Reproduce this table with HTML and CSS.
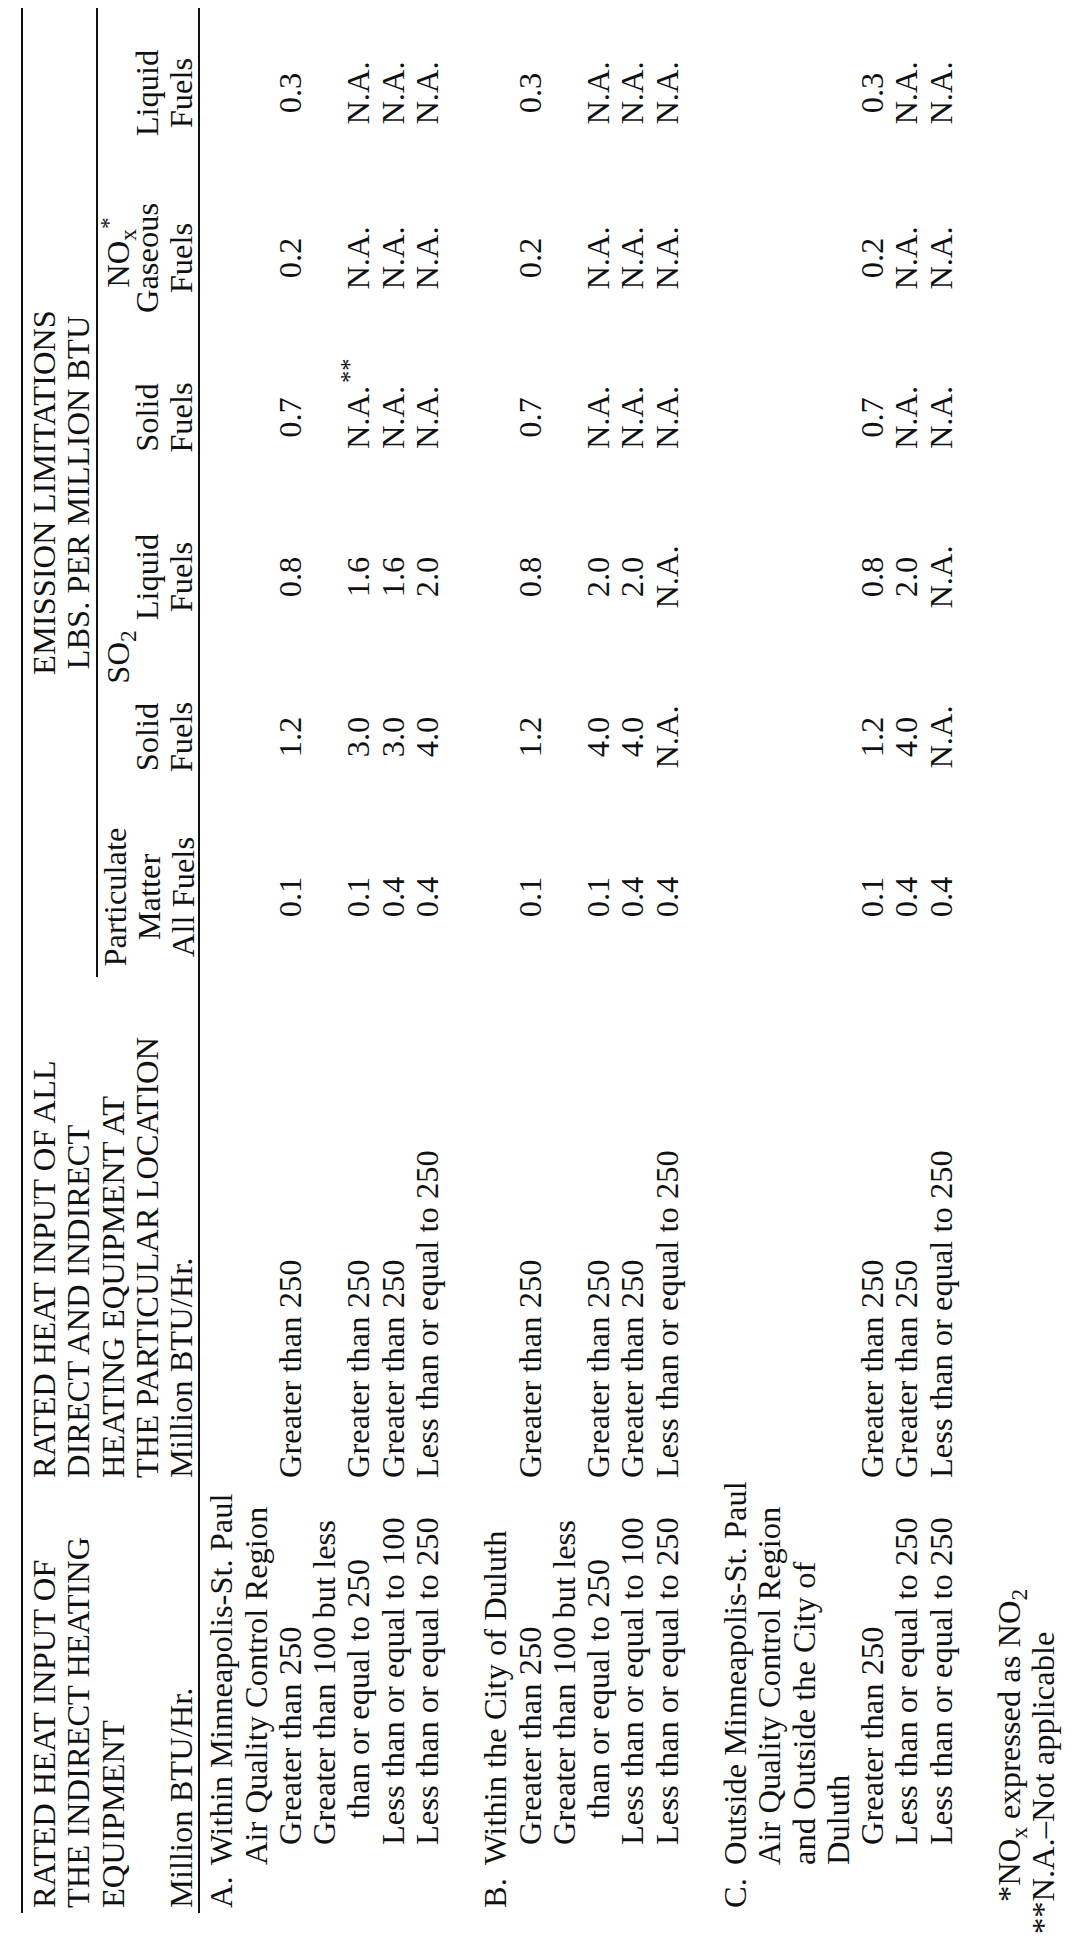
FILE: index.html
```html
<!DOCTYPE html>
<html lang="en">
<head>
<meta charset="utf-8">
<title>Emission Limitations</title>
<link rel="stylesheet" href="styles.css">
</head>
<body>
<div class="viewport">
  <div class="page">
    <div class="table">
      <div class="thead">
        <div class="h1">RATED HEAT INPUT OF<br>THE INDIRECT HEATING<br>EQUIPMENT<br><br>Million BTU/Hr.</div>
        <div class="h2">RATED HEAT INPUT OF ALL<br>DIRECT AND INDIRECT<br>HEATING EQUIPMENT AT<br>THE PARTICULAR LOCATION<br>Million BTU/Hr.</div>
        <div class="em">EMISSION LIMITATIONS<br>LBS. PER MILLION BTU</div>
        <div class="subhead">
          <div class="pm">Particulate<br>Matter<br>All Fuels</div>
          <div class="grp so2">SO<span class="sub">2</span></div>
          <div class="grp nox">NO<span class="sub">x</span><span class="sup">*</span></div>
          <div class="fuel f2">Solid<br>Fuels</div>
          <div class="fuel f3">Liquid<br>Fuels</div>
          <div class="fuel f4">Solid<br>Fuels</div>
          <div class="fuel f5">Gaseous<br>Fuels</div>
          <div class="fuel f6">Liquid<br>Fuels</div>
        </div>
      </div>

      <div class="tbody">
        <div class="tr"><div class="c1 lv0"><span class="lbl">A.</span>Within Minneapolis-St. Paul</div></div>
        <div class="tr"><div class="c1 lv1">Air Quality Control Region</div></div>
        <div class="tr"><div class="c1 lv2">Greater than 250</div><div class="c2">Greater than 250</div><div class="v">0.1</div><div class="v">1.2</div><div class="v">0.8</div><div class="v">0.7</div><div class="v">0.2</div><div class="v">0.3</div></div>
        <div class="tr"><div class="c1 lv2">Greater than 100 but less</div></div>
        <div class="tr"><div class="c1 lv3">than or equal to 250</div><div class="c2">Greater than 250</div><div class="v">0.1</div><div class="v">3.0</div><div class="v">1.6</div><div class="v"><span class="na">N.A.<span class="fn">**</span></span></div><div class="v">N.A.</div><div class="v">N.A.</div></div>
        <div class="tr"><div class="c1 lv2">Less than or equal to 100</div><div class="c2">Greater than 250</div><div class="v">0.4</div><div class="v">3.0</div><div class="v">1.6</div><div class="v">N.A.</div><div class="v">N.A.</div><div class="v">N.A.</div></div>
        <div class="tr"><div class="c1 lv2">Less than or equal to 250</div><div class="c2">Less than or equal to 250</div><div class="v">0.4</div><div class="v">4.0</div><div class="v">2.0</div><div class="v">N.A.</div><div class="v">N.A.</div><div class="v">N.A.</div></div>
        <div class="tr"></div>

        <div class="tr"><div class="c1 lv0"><span class="lbl">B.</span>Within the City of Duluth</div></div>
        <div class="tr"><div class="c1 lv2">Greater than 250</div><div class="c2">Greater than 250</div><div class="v">0.1</div><div class="v">1.2</div><div class="v">0.8</div><div class="v">0.7</div><div class="v">0.2</div><div class="v">0.3</div></div>
        <div class="tr"><div class="c1 lv2">Greater than 100 but less</div></div>
        <div class="tr"><div class="c1 lv3">than or equal to 250</div><div class="c2">Greater than 250</div><div class="v">0.1</div><div class="v">4.0</div><div class="v">2.0</div><div class="v">N.A.</div><div class="v">N.A.</div><div class="v">N.A.</div></div>
        <div class="tr"><div class="c1 lv2">Less than or equal to 100</div><div class="c2">Greater than 250</div><div class="v">0.4</div><div class="v">4.0</div><div class="v">2.0</div><div class="v">N.A.</div><div class="v">N.A.</div><div class="v">N.A.</div></div>
        <div class="tr"><div class="c1 lv2">Less than or equal to 250</div><div class="c2">Less than or equal to 250</div><div class="v">0.4</div><div class="v">N.A.</div><div class="v">N.A.</div><div class="v">N.A.</div><div class="v">N.A.</div><div class="v">N.A.</div></div>
        <div class="tr"></div>

        <div class="tr"><div class="c1 lv0"><span class="lbl">C.</span>Outside Minneapolis-St. Paul</div></div>
        <div class="tr"><div class="c1 lv1">Air Quality Control Region</div></div>
        <div class="tr"><div class="c1 lv1">and Outside the City of</div></div>
        <div class="tr"><div class="c1 lv1">Duluth</div></div>
        <div class="tr"><div class="c1 lv2">Greater than 250</div><div class="c2">Greater than 250</div><div class="v">0.1</div><div class="v">1.2</div><div class="v">0.8</div><div class="v">0.7</div><div class="v">0.2</div><div class="v">0.3</div></div>
        <div class="tr"><div class="c1 lv2">Less than or equal to 250</div><div class="c2">Greater than 250</div><div class="v">0.4</div><div class="v">4.0</div><div class="v">2.0</div><div class="v">N.A.</div><div class="v">N.A.</div><div class="v">N.A.</div></div>
        <div class="tr"><div class="c1 lv2">Less than or equal to 250</div><div class="c2">Less than or equal to 250</div><div class="v">0.4</div><div class="v">N.A.</div><div class="v">N.A.</div><div class="v">N.A.</div><div class="v">N.A.</div><div class="v">N.A.</div></div>
      </div>
    </div>

    <div class="notes">
      <div class="n1">*NO<span class="sub">x</span> expressed as NO<span class="sub">2</span></div>
      <div class="n2">**N.A.–Not applicable</div>
    </div>
  </div>
</div>
</body>
</html>
```

FILE: styles.css
```css
html, body {
  margin: 0;
  padding: 0;
  background: #ffffff;
  overflow: hidden;
}

.viewport {
  width: 1074px;
  height: 1950px;
  overflow: hidden;
  background: #ffffff;
}

/* The page is laid out upright (1950 x 1074) and turned a quarter turn,
   as the scanned table is printed sideways. */
.page {
  width: 1950px;
  height: 1074px;
  box-sizing: border-box;
  padding-top: 21px;
  transform-origin: 0 0;
  transform: translateY(1950px) rotate(-90deg);
  font-family: "Liberation Serif", "Times New Roman", serif;
  font-size: 32.5px;
  line-height: 34.25px;
  color: #111111;
}

.table {
  margin-left: 37px;
  width: 1905px;
  border-top: 2px solid #111111;
}

.thead {
  display: grid;
  grid-template-columns: 425px 511px 160px 160px 160px 159px 160px 170px;
  grid-template-rows: repeat(5, 34.25px);
  padding-top: 4px;
  border-bottom: 2px solid #111111;
  white-space: nowrap;
}

.h1 {
  grid-column: 1;
  grid-row: 1 / 6;
  padding-left: 5px;
}

.h2 {
  grid-column: 2;
  grid-row: 1 / 6;
  padding-left: 10px;
}

.em {
  grid-column: 3 / 9;
  grid-row: 1 / 3;
  text-align: center;
}

.subhead {
  grid-column: 3 / 9;
  grid-row: 3 / 6;
  border-top: 2px solid #111111;
  display: grid;
  grid-template-columns: 160px 160px 160px 159px 160px 170px;
  grid-template-rows: 32.25px 34.25px 34.25px;
  text-align: center;
}

.pm {
  grid-column: 1;
  grid-row: 1 / 4;
}

.grp {
  grid-row: 1;
  padding-top: 3px;
}

.so2 { grid-column: 2 / 4; }
.nox { grid-column: 4 / 7; }

.fuel { grid-row: 2 / 4; }
.f2 { grid-column: 2; }
.f3 { grid-column: 3; }
.f4 { grid-column: 4; }
.f5 { grid-column: 5; }
.f6 { grid-column: 6; }

.sub {
  font-size: 0.72em;
  line-height: 0;
  vertical-align: -0.28em;
}

.sup {
  font-size: 0.72em;
  line-height: 0;
  vertical-align: 0.55em;
}

.tbody {
  padding-top: 4px;
}

.tr {
  display: grid;
  grid-template-columns: 425px 511px 160px 160px 160px 159px 160px 170px;
  height: 34.25px;
  white-space: nowrap;
}

.c1 { grid-column: 1; }
.lv0 { padding-left: 5px; }
.lv1 { padding-left: 48px; }
.lv2 { padding-left: 68px; }
.lv3 { padding-left: 94px; }

.lbl {
  display: inline-block;
  width: 43px;
}

.c2 {
  grid-column: 2;
  padding-left: 10px;
}

.v {
  text-align: center;
}

.na {
  position: relative;
}

.fn {
  position: absolute;
  left: 100%;
  top: -0.3em;
  margin-left: 3px;
  font-size: 0.75em;
}

.notes {
  margin-top: 34.25px;
  margin-left: 16px;
  white-space: nowrap;
}

.n1 {
  padding-left: 32px;
}
```
